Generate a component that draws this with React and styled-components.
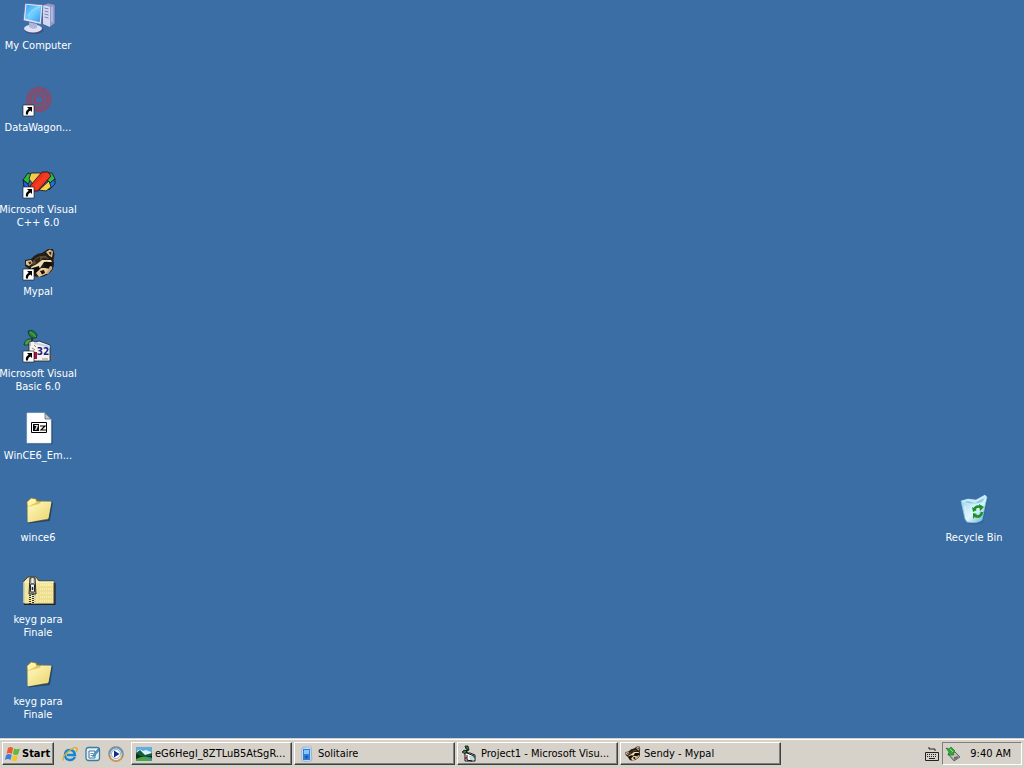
import React from "react";
import styled, { createGlobalStyle, css } from "styled-components";

const GlobalStyle = createGlobalStyle`
  *, *::before, *::after { box-sizing: border-box; }
  body {
    margin: 0;
    background: #3a6ea5;
    font-family: Tahoma, "DejaVu Sans Condensed", "DejaVu Sans", sans-serif;
    font-size: 11px;
    line-height: 13px;
  }
  button { font: inherit; color: inherit; }
  svg { display: block; overflow: visible; }
`;

const Screen = styled.div`
  display: flex;
  flex-direction: column;
  min-height: 100vh;
`;

const Desktop = styled.main`
  flex: 1;
  display: grid;
  grid-template-columns: 76px 1fr 76px;
  grid-auto-rows: 82px;
  padding-right: 12px;
`;

const Shortcut = styled.button`
  grid-column: ${(p) => (p.$right ? 3 : 1)};
  grid-row: ${(p) => p.$row};
  display: flex;
  flex-direction: column;
  align-items: center;
  gap: 5px;
  padding: 2px 0 0;
  border: 0;
  background: none;
  color: #fff;
  line-height: 13px;
`;

const ShortcutLabel = styled.span`
  white-space: pre;
  text-align: center;
`;

const raised = css`
  border: 1px solid;
  border-color: #fff #404040 #404040 #fff;
  box-shadow: inset -1px -1px 0 #808080;
`;

const Taskbar = styled.footer`
  display: flex;
  align-items: center;
  height: 30px;
  padding: 2px;
  background: #d6d2ca;
  color: #000;
  border-top: 1px solid #d4d0c8;
  box-shadow: inset 0 1px 0 #fff;
`;

const StartButton = styled.button`
  ${raised}
  flex: none;
  display: flex;
  align-items: center;
  gap: 1px;
  width: 52px;
  height: 23px;
  padding: 0 1px;
  background: #d6d2ca;
  font-weight: bold;
`;

const QuickLaunch = styled.nav`
  flex: none;
  display: flex;
  gap: 7px;
  padding: 0 7px 0 8px;
`;

const QuickButton = styled.button`
  width: 16px;
  height: 16px;
  padding: 0;
  border: 0;
  background: none;
`;

const TaskList = styled.div`
  flex: 1;
  min-width: 0;
  display: flex;
  gap: 2px;
`;

const TaskButton = styled.button`
  ${raised}
  flex: 0 1 161px;
  min-width: 0;
  display: flex;
  align-items: center;
  gap: 3px;
  height: 23px;
  padding: 0 4px;
  background: #d6d2ca;
  white-space: nowrap;
  svg { flex: none; }
`;

const TaskTitle = styled.span`
  overflow: hidden;
`;

const LanguageButton = styled(QuickButton)`
  flex: none;
  margin-right: 2px;
`;

const Tray = styled.div`
  flex: none;
  display: flex;
  align-items: center;
  justify-content: space-between;
  width: 80px;
  height: 23px;
  padding: 0 10px 0 2px;
  border: 1px solid;
  border-color: #808080 #fff #fff #808080;
`;

const Svg32 = ({ children }) => (
  <svg width="32" height="32" viewBox="0 0 32 32" aria-hidden="true">{children}</svg>
);
const Svg16 = ({ children }) => (
  <svg width="16" height="16" viewBox="0 0 16 16" aria-hidden="true">{children}</svg>
);

const ArrowBadge = () => (
  <g>
    <path d="M1 21h11v11H1z" fill="#fff" stroke="#111" strokeWidth="0.6" />
    <path d="M5 23h5v5L8.4 26.400Q5.800 27.500 6 30.500H4Q3 27 6.700 24.700Z" fill="#000" />
  </g>
);

const ComputerIcon = () => (
  <Svg32>
    <defs>
      <linearGradient id="screen" x1="0" y1="0" x2="1" y2="1">
        <stop offset="0" stopColor="#3a9ff4" /><stop offset=".5" stopColor="#6fd0ff" /><stop offset="1" stopColor="#3793ec" />
      </linearGradient>
    </defs>
    <path d="M21 3l5-2 7 1.500v19L28 25l-7-3Z" fill="#8f9cca" stroke="#4c5c98" strokeWidth=".7" />
    <path d="M21 3l7 1.800V25l-7-3Z" fill="#d3d8f0" />
    <path d="M22.500 6l4 1m-4 2 4 1m-4 2 4 1m-4 2 4 1" stroke="#7480b0" />
    <path d="M30 5v15" stroke="#b7c0e6" strokeWidth="1.500" />
    <ellipse cx="12" cy="28" rx="9.500" ry="4" fill="#3f4d7d" />
    <ellipse cx="11" cy="26.500" rx="9" ry="4" fill="#dfe1f3" />
    <path d="M7 19l8 2v5q-4 2-8-1Z" fill="#aeb6da" />
    <path d="M3 1.200 21 2.800 19.200 22.500 1.200 18.500Z" fill="#dfe4f8" stroke="#56649c" strokeWidth=".8" />
    <path d="M4.500 2.800 19.200 4.200 17.700 20.200 3 16.700Z" fill="url(#screen)" />
    <path d="M6 14Q11 6 18 5" stroke="#a9e8ff" strokeWidth="1.500" fill="none" opacity=".5" />
  </Svg32>
);

const WagonIcon = () => (
  <Svg32>
    <g fill="none" stroke="#b03a50" opacity=".75">
      <circle cx="17" cy="15.500" r="10" strokeWidth="5" opacity=".5" />
      <circle cx="17" cy="15.500" r="11.500" strokeWidth="2.500" strokeDasharray="3 1.500" />
      <circle cx="17" cy="15.500" r="8" strokeWidth="2" strokeDasharray="4 1" />
      <circle cx="17" cy="15.500" r="4.500" strokeWidth="2.500" />
    </g>
    <ArrowBadge />
  </Svg32>
);

const VisualCIcon = () => (
  <Svg32>
    <g stroke="#111" strokeWidth=".8" strokeLinejoin="round">
      <path d="M1 14 6 7l5 2-5 9Z" fill="#27b83c" />
      <path d="M1 14l5 4 3 8-7-5Z" fill="#245de0" />
      <path d="M9 7h9l3 3-10 8-4-5Z" fill="#f2c84e" />
      <path d="M23 7h7l3 6-6 5Z" fill="#35b94b" />
      <path d="M33 13v5l-6 6-3-4Z" fill="#1876dd" />
      <path d="M17 24 27 15l2 6-5 4Z" fill="#f5d44a" />
      <path d="M8 20 20 6h6l3 4-13 15h-5Z" fill="#ed301e" />
      <path d="M12 20 24 7h2l2 3-14 14Z" fill="#f53c20" stroke="none" />
    </g>
    <ArrowBadge />
  </Svg32>
);

const RaccoonArt = () => (
  <g>
    <path d="M20 5 26 1l5 0 1.500 5-1 6q2 8-4 13-7 6-16 3L7 21l-4-3 0-6 6-1q5-6 11-6Z" fill="#241d15" />
    <path d="M24 4l4-2.500 3 2-1 6-3-2Z" fill="#d9bd8c" />
    <path d="M26.500 4.500l3-1-.500 4Z" fill="#35291c" />
    <path d="M4 13l5-1 2 3-4 3-3-1.500Z" fill="#e0c592" />
    <path d="M6 14l3-.500.500 2-2 1Z" fill="#44321f" />
    <path d="M11 13Q16 7 24 8l3 3-6-1-5 5-6 2Z" fill="#5d4b33" />
    <path d="M13 12l5-3 0 4-4 3Zm8-2.500 4 1-4 1.500Z" fill="#2e2418" />
    <path d="M9 19l6-3 5-4 9 0 1 2-8 0-4 6-8 2Z" fill="#f2deb3" />
    <path d="M10 20l7-2 1 4-5 3q-4-1-3-5Zm12-6q7-1 8 3l-4 4-4-3Z" fill="#100e0c" />
    <path d="M14 25l5-5 4 0 5 1-4 5-7 3Z" fill="#e9cc9a" />
    <path d="M18 23l4-1 1 3-3 1.500Z" fill="#160f0b" />
    <path d="M28 18q3 0 2 3l-4 5-2 0Z" fill="#c6a878" />
  </g>
);

const MypalIcon = () => <Svg32><RaccoonArt /><ArrowBadge /></Svg32>;

const BasicIcon = () => (
  <Svg32>
    <path d="M10 8v5l5 4" fill="none" stroke="#111" strokeWidth="1.200" />
    <path d="M6 1Q12-1 15 5l-1 3Q7 9 6 1Z" fill="#20813c" stroke="#102d18" strokeWidth=".8" />
    <path d="M8 2l6 5" stroke="#5fae48" />
    <path d="M2 15Q3 8 10 9q-1 7-8 6Z" fill="#45a142" stroke="#14361a" strokeWidth=".8" />
    <path d="M10 29h22l2-3-6-1" fill="#626b78" opacity=".7" />
    <path d="M7 12l4-1 3 1 3-1 11 4v16H11l-4-5Z" fill="#f3f4ee" stroke="#20232b" strokeWidth=".8" />
    <path d="M12 12l16 4v2l-16-4Z" fill="#c9d0e8" />
    <path d="M8 12v4m4-1 2 2m-4 1 3 2m7 9h6" stroke="#8b9188" />
    <path d="M12 22h3v7h-3Z" fill="#9d1635" />
    <text x="21" y="25" textAnchor="middle" fontSize="10" fontWeight="bold" fill="#242184">32</text>
    <ArrowBadge />
  </Svg32>
);

const ArchiveIcon = () => (
  <Svg32>
    <path d="M6 31.500h24V8" fill="none" stroke="#345574" strokeWidth="1.500" />
    <path d="M5 1h18l6 6v24H5Z" fill="#fff" stroke="#dce4e7" strokeWidth=".6" />
    <path d="M23 1v6h6Z" fill="#bfc7cc" stroke="#546573" strokeWidth=".8" />
    <path d="M9.500 10.500h15v10h-15Z" fill="#fff" stroke="#000" />
    <path d="M11 12h6v7h-6Z" fill="#000" />
    <text x="12" y="18" fontSize="7" fontWeight="bold" fill="#fff">7</text>
    <path d="M18 14h5l-4 4h5" fill="none" stroke="#000" strokeWidth="1.200" />
  </Svg32>
);

const FolderIcon = () => (
  <Svg32>
    <defs>
      <linearGradient id="folder" x1="0" y1="0" x2="1" y2="1">
        <stop offset="0" stopColor="#fffac0" /><stop offset="1" stopColor="#ead36a" />
      </linearGradient>
    </defs>
    <path d="M6 28.500 27 26l3-18" fill="none" stroke="#263c49" strokeWidth="2" opacity=".75" />
    <path d="M5 8l4-4 5 1 1 2 14 1-3 17L6 28Z" fill="#e1c756" stroke="#997f2d" strokeWidth=".7" />
    <path d="M5.500 8l4-3.200 4 .700.500 3-8 4Z" fill="#fff5ae" />
    <path d="M6 13l12-3 1-2 10 0-3 16L6 28Z" fill="url(#folder)" stroke="#f9ecaa" strokeWidth=".7" />
  </Svg32>
);

const ZipIcon = () => (
  <Svg32>
    <path d="M2 5l4-4h8l3 4h15v23H2Z" fill="#f0e69d" stroke="#474128" />
    <path d="M2 6h30M2 6v21" stroke="#fffbd3" strokeWidth="1.200" />
    <path d="M16 10h15v17H16Z" fill="#eee090" />
    <path d="M18 9h13M18 13h13M18 17h13M18 21h13M18 25h13" stroke="#fffacb" strokeDasharray="1 1" />
    <path d="M8 2h5l1 16H7Z" fill="#aaa" stroke="#292929" strokeWidth="1" />
    <path d="M10.500 2v5" stroke="#eee" strokeWidth="2" />
    <rect x="8.500" y="8" width="4" height="8" rx="1" fill="#eee" stroke="#222" />
    <path d="M10.500 11v3" stroke="#222" strokeWidth="1.500" />
    <path d="M8 19v9" stroke="#333" strokeWidth="2" strokeDasharray="1 1" />
    <path d="M11 18v10" stroke="#333" strokeWidth="2" strokeDasharray="1 1" />
    <path d="M13 19v9" stroke="#aaa" strokeWidth="1" strokeDasharray="1 1" />
    <path d="M2 28.500h31V7" fill="none" stroke="#222" strokeWidth="1.200" />
  </Svg32>
);

const BinIcon = () => (
  <Svg32>
    <defs>
      <linearGradient id="bin" x1="0" y1="0" x2="1" y2="1">
        <stop offset="0" stopColor="#8ccdea" /><stop offset=".55" stopColor="#e4f7fd" /><stop offset="1" stopColor="#5ba3c9" />
      </linearGradient>
    </defs>
    <path d="M8 26q8 6 16 0l4-22 2 1-5 23q-7 4-15 1Z" fill="#235c8a" opacity=".5" />
    <path d="M3 7 10 5l8 1L27 1l2 2-5 23q-5 4-15 2L7 25Z" fill="url(#bin)" stroke="#7bbfe0" strokeWidth=".7" />
    <path d="M3 7l7-2 8 1 9-5 1 2-3 6q-10 3-18 0Z" fill="#c9ecfa" />
    <path d="M6 8q8 3 18 0l3-4-5 2-5 3-7-2Z" fill="#8fc9e3" />
    <path d="M7 12l3 14m3-14v13" stroke="#d8f3fc" strokeWidth="2" opacity=".7" />
    <g fill="none" stroke="#16932b" strokeWidth="2.600">
      <path d="M16 16q2-5 7-3M24 18q-1 6-7 4" />
    </g>
    <path d="M21 10l5 3-4 4Zm-2 10-4-1v6Zm-5-7 1 5 4-2Z" fill="#16932b" />
  </Svg32>
);

const FlagIcon = () => (
  <svg width="17" height="16" viewBox="0 0 17 16" aria-hidden="true">
    <path d="M4 2q3-2 5 0L8 8Q5 6 2.500 8Z" fill="#eb5b2d" />
    <path d="M10 2.500q3 1.500 6 0L14 8.500q-3 1-5-.500Z" fill="#60b83c" />
    <path d="M2.200 9q3-2 5.500 0L6.500 14Q4 12 .800 14Z" fill="#407ce0" />
    <path d="M8.800 9q3 1.500 5.200.500L12.500 15q-3 1-5-1Z" fill="#f3c72c" />
  </svg>
);

const ExplorerIcon = () => (
  <Svg16>
    <path d="M13 11q-2 3.500-5.500 3Q3 13.500 3 9t4.500-5q5 0 5.500 5H5" fill="none" stroke="#1586d0" strokeWidth="2.400" />
    <path d="M4.500 7q2-2.500 5-1.500" stroke="#7dcdf5" fill="none" />
    <path d="M1.500 14.500Q-.500 12 5 6.500 12 0 15 2q1 1-1 4" fill="none" stroke="#e0aa20" strokeWidth="1.300" />
  </Svg16>
);

const ShowDesktopIcon = () => (
  <Svg16>
    <rect x="1" y="1.500" width="13.500" height="13" rx="2.500" fill="#e2f0f7" stroke="#3b7ca5" strokeWidth="1.300" />
    <path d="M4 5h6v7H4Z" fill="#fff" stroke="#47728d" />
    <path d="M5.500 7.500h3m-3 2h2" stroke="#5595bb" />
    <path d="M8 9l5-6 1.500 1-5 6-2 .500Z" fill="#4ca3d4" stroke="#275e82" strokeWidth=".6" />
  </Svg16>
);

const PlayerIcon = () => (
  <Svg16>
    <circle cx="8" cy="8" r="7" fill="#e8eef5" stroke="#7c8288" strokeWidth="1.500" />
    <path d="M2 9a6 6 0 0 0 12 0" fill="none" stroke="#e09c42" strokeWidth="1.400" />
    <path d="M2 8a6 6 0 0 1 12 0" fill="none" stroke="#66a9cb" strokeWidth="1.200" />
    <circle cx="8" cy="8" r="4.500" fill="#fff" stroke="#5d7fb4" strokeWidth=".6" />
    <path d="M6 4.500 11.500 8 6 11.500Z" fill="#122e85" />
  </Svg16>
);

const PictureIcon = () => (
  <Svg16>
    <path d="M0 1h16v14H0Z" fill="#c9e9f7" />
    <path d="M0 1h16v6H0Z" fill="#5eaede" />
    <path d="M1 5q3-3 6 0l3-1 5 2v3H1Z" fill="#d7f2fb" />
    <path d="M0 7l4-3 5 5 7-2v4H0Z" fill="#185a36" />
    <path d="M0 8l7 3 9-1v3H0Z" fill="#12291b" />
    <path d="M0 13q7-4 16-1v3H0Z" fill="#4aa544" />
    <path d="M8 12q4-1 8 0v2q-4-2-8-2Z" fill="#318dc0" />
  </Svg16>
);

const SolitaireIcon = () => (
  <Svg16>
    <path d="M4 1l8-1 1 14-8 1Z" fill="#d6e9fb" stroke="#8daac4" strokeWidth=".5" />
    <rect x="3" y="2" width="9" height="13" rx="1" fill="#eff9ff" stroke="#638bba" strokeWidth=".6" />
    <path d="M4 3h7v11H4Z" fill="#2f7fda" />
    <path d="M5 4h5v4H5Z" fill="#80c8ff" />
    <path d="M7.500 9.500l2 1.500-2 2-2-2Z" fill="#1559b2" />
  </Svg16>
);

const ProjectIcon = () => (
  <Svg16>
    <path d="M5 4v3l4 2M1 5l6-1" fill="none" stroke="#111" />
    <path d="M3 0h3l1 4-3-1Z" fill="#356e42" stroke="#111" strokeWidth=".8" />
    <path d="M0 6l3-2 2 2-2 2Z" fill="#3b8150" stroke="#111" strokeWidth=".8" />
    <path d="M3 7h5l5 2v6H3Z" fill="#fff" stroke="#111" />
    <path d="M5 7l7 3v2M5 9v5l5 1" fill="none" stroke="#111" />
    <path d="M7 10h4l1 4H8Z" fill="#b5dde2" />
    <path d="M3 11h2v2H3Z" fill="#b72231" />
  </Svg16>
);

const RaccoonSmallIcon = () => (
  <svg width="16" height="16" viewBox="2 0 32 32" aria-hidden="true"><RaccoonArt /></svg>
);

const KeyboardIcon = () => (
  <Svg16>
    <path d="M5 1v2h6V5M1.500 6.500h13v8h-13Z" fill="none" stroke="#222" />
    <path d="M3 8.500h10M3 10.500h10" stroke="#222" strokeDasharray="1 1" />
    <path d="M5 12.500h6" stroke="#222" />
  </Svg16>
);

const EjectIcon = () => (
  <Svg16>
    <path d="M3 8l7-2 5 5-6 4Z" fill="#9a9a92" stroke="#4f5652" strokeWidth=".8" />
    <path d="M4 8l6-1 4 4-5 2Z" fill="#c4c8bc" />
    <path d="M9 11l4-1v2l-4 2Z" fill="#657268" />
    <path d="M1 2l3 1 2-2 4 4-2 2 1 2H3l1-3Z" fill="#37a83c" stroke="#197526" strokeWidth=".7" />
    <path d="M5 3l3 3" stroke="#8ae271" />
  </Svg16>
);

const shortcuts = [
  { label: "My Computer", Icon: ComputerIcon, row: 1 },
  { label: "DataWagon...", Icon: WagonIcon, row: 2 },
  { label: "Microsoft Visual\nC++ 6.0", Icon: VisualCIcon, row: 3 },
  { label: "Mypal", Icon: MypalIcon, row: 4 },
  { label: "Microsoft Visual\nBasic 6.0", Icon: BasicIcon, row: 5 },
  { label: "WinCE6_Em...", Icon: ArchiveIcon, row: 6 },
  { label: "wince6", Icon: FolderIcon, row: 7 },
  { label: "keyg para\nFinale", Icon: ZipIcon, row: 8 },
  { label: "keyg para\nFinale", Icon: FolderIcon, row: 9 },
  { label: "Recycle Bin", Icon: BinIcon, row: 7, right: true },
];

const tasks = [
  { title: "eG6Hegl_8ZTLuB5AtSgR...", Icon: PictureIcon },
  { title: "Solitaire", Icon: SolitaireIcon },
  { title: "Project1 - Microsoft Visu...", Icon: ProjectIcon },
  { title: "Sendy - Mypal", Icon: RaccoonSmallIcon },
];

export default function App() {
  return (
    <Screen>
      <GlobalStyle />
      <Desktop>
        {shortcuts.map(({ label, Icon, row, right }) => (
          <Shortcut key={row + label} $row={row} $right={right}>
            <Icon />
            <ShortcutLabel>{label}</ShortcutLabel>
          </Shortcut>
        ))}
      </Desktop>
      <Taskbar>
        <StartButton><FlagIcon />Start</StartButton>
        <QuickLaunch aria-label="Quick Launch">
          <QuickButton aria-label="Internet Explorer"><ExplorerIcon /></QuickButton>
          <QuickButton aria-label="Show Desktop"><ShowDesktopIcon /></QuickButton>
          <QuickButton aria-label="Media Player"><PlayerIcon /></QuickButton>
        </QuickLaunch>
        <TaskList>
          {tasks.map(({ title, Icon }) => (
            <TaskButton key={title}><Icon /><TaskTitle>{title}</TaskTitle></TaskButton>
          ))}
        </TaskList>
        <LanguageButton aria-label="Keyboard"><KeyboardIcon /></LanguageButton>
        <Tray>
          <QuickButton aria-label="Safely Remove Hardware"><EjectIcon /></QuickButton>
          <time>9:40 AM</time>
        </Tray>
      </Taskbar>
    </Screen>
  );
}
